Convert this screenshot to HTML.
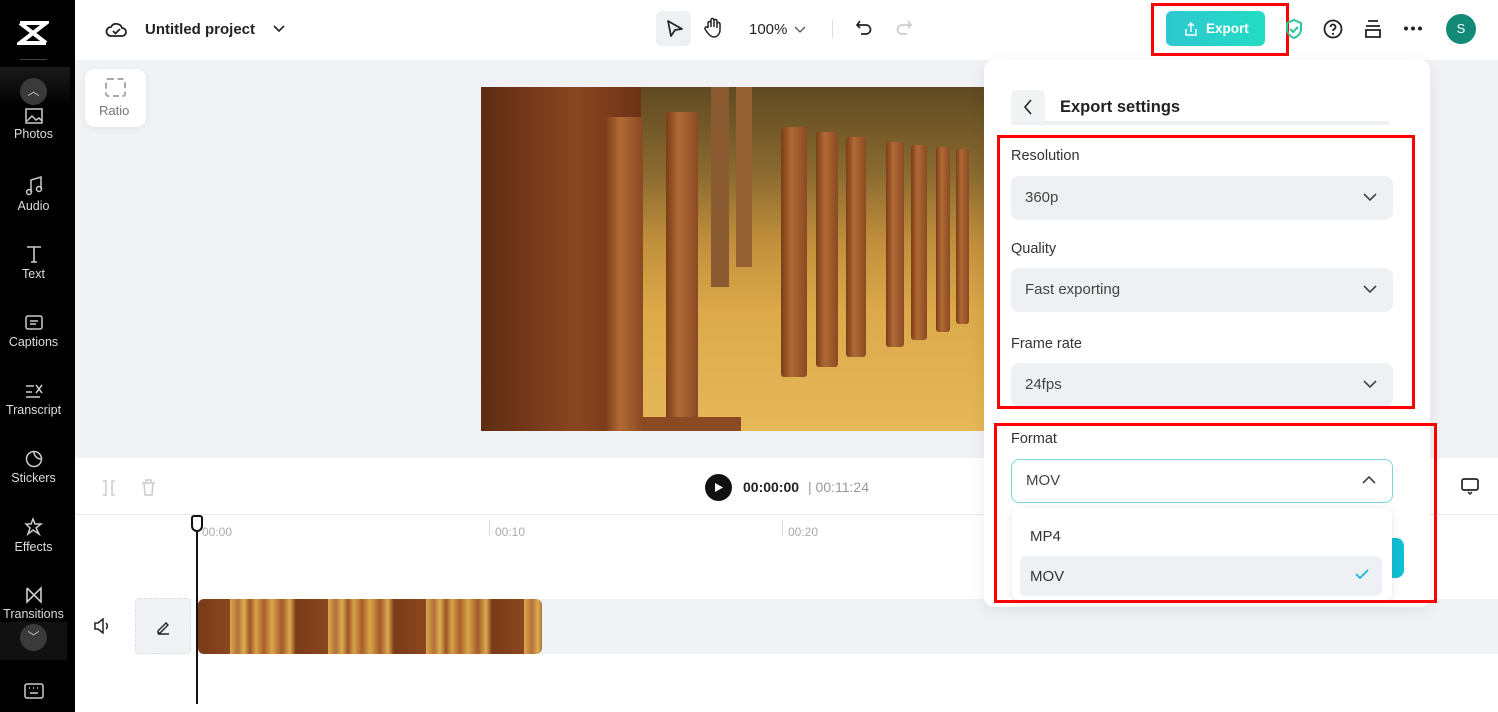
<!DOCTYPE html>
<html><head><meta charset="utf-8"><style>
*{box-sizing:border-box;margin:0;padding:0}
body{width:1498px;height:712px;overflow:hidden;position:relative;font-family:"Liberation Sans",sans-serif;background:#fff;color:#1f2329}
.abs{position:absolute}
.side{left:0;top:0;width:75px;height:712px;background:#000}
.si{position:absolute;left:0;width:67px;text-align:center;color:#ddd;font-size:12.5px}
.si svg{display:block;margin:0 auto 3px}
.red{position:absolute;border:3px solid #f00}
.lbl{position:absolute;left:1011px;font-size:14.5px;color:#333}
.sel{position:absolute;left:1011px;width:382px;height:44px;background:#eef0f3;border-radius:8px;font-size:15px;color:#444;padding:13px 0 0 14px}
.sel svg{position:absolute;right:16px;top:17px}
.post{position:absolute;background:linear-gradient(90deg,#7a3d16,#b06a35 40%,#8a4a22);border-radius:3px}
</style></head><body>
<div class="abs side"></div>
<svg class="abs" style="left:17px;top:20px" width="32" height="26" viewBox="0 0 32 26"><path d="M3 3h26L3 23h26" stroke="#fff" stroke-width="4" fill="none"/><path d="M3 3l26 20" stroke="#fff" stroke-width="4" fill="none"/></svg>
<div class="abs" style="left:20px;top:59px;width:27px;height:1px;background:#444"></div>
<div class="abs" style="left:0;top:67px;width:70px;height:40px;background:linear-gradient(#1a1a1a,#000)"></div>
<div class="si" style="top:108px"><svg width="18" height="16"><rect x="1" y="1" width="16" height="14" stroke="#ccc" stroke-width="1.5" fill="none"/><path d="M2 13l5-5 4 4 3-2 3 3" stroke="#ccc" fill="none" stroke-width="1.5"/></svg>Photos</div>
<div class="abs" style="left:20px;top:78px;width:27px;height:27px;border-radius:50%;background:#3a3a3a;color:#ccc;font-size:12px;text-align:center;line-height:27px">︿</div>
<div class="si" style="top:176px"><svg width="18" height="20"><path d="M6 16V4l10-3v12" stroke="#ccc" stroke-width="1.5" fill="none"/><circle cx="4" cy="16" r="2.5" stroke="#ccc" fill="none" stroke-width="1.5"/><circle cx="14" cy="13" r="2.5" stroke="#ccc" fill="none" stroke-width="1.5"/></svg>Audio</div>
<div class="si" style="top:244px"><svg width="18" height="20"><path d="M2 3h14M9 3v15M6 18h6" stroke="#ccc" stroke-width="1.6" fill="none"/></svg>Text</div>
<div class="si" style="top:314px"><svg width="18" height="18"><rect x="1" y="2" width="16" height="13" rx="2" stroke="#ccc" fill="none" stroke-width="1.5"/><path d="M5 7h8M5 10h6" stroke="#ccc" stroke-width="1.5"/></svg>Captions</div>
<div class="si" style="top:382px"><svg width="20" height="18"><path d="M2 4h8M2 10h6M2 15h14M12 3l6 8M18 3l-6 8" stroke="#ccc" stroke-width="1.5" fill="none"/></svg>Transcript</div>
<div class="si" style="top:450px"><svg width="18" height="18"><circle cx="9" cy="9" r="7.5" stroke="#ccc" fill="none" stroke-width="1.5"/><path d="M9 2a7 7 0 0 0 7 7" stroke="#ccc" fill="none" stroke-width="1.5"/></svg>Stickers</div>
<div class="si" style="top:517px"><svg width="20" height="20"><path d="M9 2l2 5 6 0-5 4 3 6-6-4-5 4 2-6-4-4 5 0z" stroke="#ccc" fill="none" stroke-width="1.5"/></svg>Effects</div>
<div class="si" style="top:586px"><svg width="18" height="18"><path d="M2 2v14L16 2v14L2 2" stroke="#ccc" fill="none" stroke-width="1.6"/></svg>Transitions</div>
<div class="abs" style="left:0;top:622px;width:67px;height:38px;background:#111"></div>
<div class="abs" style="left:20px;top:624px;width:27px;height:27px;border-radius:50%;background:#3a3a3a;color:#ccc;font-size:12px;text-align:center;line-height:27px">﹀</div>
<svg class="abs" style="left:24px;top:683px" width="20" height="16"><rect x="1" y="1" width="18" height="14" rx="2" stroke="#ccc" fill="none" stroke-width="1.5"/><path d="M5 5h1M9 5h1M13 5h1M6 10h8" stroke="#ccc" stroke-width="1.5"/></svg>
<div class="abs" style="left:75px;top:340px;width:10px;height:62px;background:#222;border-radius:0 8px 8px 0"></div>

<svg class="abs" style="left:105px;top:19px" width="22" height="20" viewBox="0 0 22 20"><path d="M6 17h11a4 4 0 0 0 0-8 6 6 0 0 0-11-1 4.5 4.5 0 0 0 0 9z" stroke="#222" stroke-width="1.8" fill="none"/><path d="M8 12l2.5 2.5L15 10" stroke="#222" stroke-width="1.8" fill="none"/></svg>
<div class="abs" style="left:145px;top:21px;font-size:15px;font-weight:bold;color:#222">Untitled project</div>
<svg class="abs" style="left:273px;top:25px" width="12" height="8"><path d="M1 1l5 5 5-5" stroke="#222" stroke-width="1.6" fill="none"/></svg>
<div class="abs" style="left:656px;top:11px;width:35px;height:35px;background:#eef0f3;border-radius:6px"></div>
<svg class="abs" style="left:666px;top:19px" width="18" height="20"><path d="M2 2l14 8-7 1-4 6z" stroke="#222" stroke-width="1.7" fill="none" stroke-linejoin="round"/></svg>
<svg class="abs" style="left:703px;top:17px" width="20" height="22"><path d="M5 11V6a1.5 1.5 0 0 1 3 0v4V3a1.5 1.5 0 0 1 3 0v7V4a1.5 1.5 0 0 1 3 0v7-4a1.5 1.5 0 0 1 3 0v6c0 4-3 7-6 7s-5-2-7-5l-2-3a1.5 1.5 0 0 1 3-1z" stroke="#222" stroke-width="1.5" fill="none"/></svg>
<div class="abs" style="left:749px;top:21px;font-size:15px;color:#222">100%</div>
<svg class="abs" style="left:794px;top:26px" width="12" height="8"><path d="M1 1l5 5 5-5" stroke="#555" stroke-width="1.3" fill="none"/></svg>
<div class="abs" style="left:832px;top:20px;width:1px;height:18px;background:#ddd"></div>
<svg class="abs" style="left:855px;top:19px" width="18" height="18"><path d="M5 2L2 6l3 3M2 6h9a4.5 4.5 0 0 1 0 9H6" stroke="#222" stroke-width="1.7" fill="none"/></svg>
<svg class="abs" style="left:895px;top:19px" width="18" height="18"><path d="M13 2l3 4-3 3M16 6H7a4.5 4.5 0 0 0 0 9h5" stroke="#ccc" stroke-width="1.7" fill="none"/></svg>
<div class="abs" style="left:1166px;top:11px;width:99px;height:35px;border-radius:6px;background:linear-gradient(90deg,#2ec8d0,#22dcc4);color:#fff;font-weight:bold;font-size:13.5px;padding:10px 0 0 40px">Export</div>
<svg class="abs" style="left:1184px;top:21px" width="14" height="16"><path d="M4 5l3-3 3 3M7 2v9M2 8v6h10V8" stroke="#fff" stroke-width="1.4" fill="none"/></svg>
<div class="red" style="left:1151px;top:3px;width:138px;height:53px"></div>
<svg class="abs" style="left:1284px;top:18px" width="20" height="22"><path d="M10 2l7 3v6c0 5-4 8-7 9-3-1-7-4-7-9V5z" stroke="#27c49a" stroke-width="2" fill="none"/><path d="M6 11l3 3 5-5" stroke="#27c49a" stroke-width="2" fill="none"/></svg>
<svg class="abs" style="left:1323px;top:19px" width="20" height="20"><circle cx="10" cy="10" r="8.5" stroke="#222" stroke-width="1.8" fill="none"/><path d="M7.5 8a2.5 2.5 0 1 1 3.5 2.3c-.8.4-1 1-1 1.7" stroke="#222" stroke-width="1.8" fill="none"/><circle cx="10" cy="14.8" r="1.1" fill="#222"/></svg>
<svg class="abs" style="left:1364px;top:19px" width="18" height="20"><path d="M4 2h10M2 7h14M2 11h14v7H2z" stroke="#222" stroke-width="1.8" fill="none"/></svg>
<svg class="abs" style="left:1403px;top:26px" width="20" height="5"><circle cx="3" cy="2.5" r="2" fill="#222"/><circle cx="10" cy="2.5" r="2" fill="#222"/><circle cx="17" cy="2.5" r="2" fill="#222"/></svg>
<div class="abs" style="left:1446px;top:14px;width:30px;height:30px;border-radius:50%;background:#128a77;color:#fff;font-size:13px;text-align:center;line-height:30px">S</div>

<div class="abs" style="left:75px;top:60px;width:1423px;height:398px;background:#f0f2f5"></div>
<div class="abs" style="left:85px;top:69px;width:61px;height:58px;background:#fff;border-radius:10px;box-shadow:0 2px 8px rgba(0,0,0,.06)"></div>
<div class="abs" style="left:105px;top:78px;width:21px;height:19px;border:2px dashed #aaa;border-radius:3px"></div>
<div class="abs" style="left:99px;top:103px;font-size:13px;color:#777">Ratio</div>
<div class="abs" style="left:481px;top:87px;width:504px;height:344px;overflow:hidden;background:linear-gradient(180deg,#5f4a22 0%,#8a6a30 25%,#c08f3c 45%,#dba94a 65%,#e6b85a 100%)">
 <div class="abs" style="left:0;top:0;width:160px;height:344px;background:linear-gradient(90deg,#5e2c12,#8a4521 60%,#6b3315)"></div>
 <div class="post" style="left:124px;top:30px;width:38px;height:314px"></div>
 <div class="post" style="left:185px;top:25px;width:32px;height:308px"></div>
 <div class="post" style="left:300px;top:40px;width:26px;height:250px"></div>
 <div class="post" style="left:335px;top:45px;width:22px;height:235px"></div>
 <div class="post" style="left:365px;top:50px;width:20px;height:220px"></div>
 <div class="post" style="left:405px;top:55px;width:18px;height:205px"></div>
 <div class="post" style="left:430px;top:58px;width:16px;height:195px"></div>
 <div class="post" style="left:455px;top:60px;width:14px;height:185px"></div>
 <div class="post" style="left:475px;top:62px;width:13px;height:175px"></div>
 <div class="abs" style="left:230px;top:0;width:18px;height:200px;background:#8a5a30"></div>
 <div class="abs" style="left:255px;top:0;width:16px;height:180px;background:#946134"></div>
 <div class="abs" style="left:160px;top:330px;width:100px;height:14px;background:#8a4a22"></div>
</div>

<svg class="abs" style="left:101px;top:479px" width="16" height="18"><path d="M2 2h3v14H2M14 2h-3v14h3" stroke="#ccc" stroke-width="1.5" fill="none"/></svg>
<svg class="abs" style="left:140px;top:478px" width="17" height="19"><path d="M2 5h13M6 5V2h5v3M4 5l1 12h7l1-12" stroke="#ccc" stroke-width="1.5" fill="none"/></svg>
<div class="abs" style="left:705px;top:474px;width:27px;height:27px;border-radius:50%;background:#111"></div>
<svg class="abs" style="left:714px;top:482px" width="10" height="11"><path d="M1 1l8 4.5L1 10z" fill="#fff"/></svg>
<div class="abs" style="left:743px;top:479px;font-size:14px;font-weight:bold;color:#222">00:00:00</div>
<div class="abs" style="left:808px;top:479px;font-size:14px;color:#999">| 00:11:24</div>
<svg class="abs" style="left:1461px;top:478px" width="18" height="18"><rect x="1" y="1" width="16" height="11" rx="2" stroke="#222" stroke-width="1.7" fill="none"/><path d="M7 14l2 2 2-2" stroke="#222" stroke-width="1.5" fill="none"/></svg>
<div class="abs" style="left:75px;top:514px;width:1423px;height:1px;background:#e8e8e8"></div>

<div class="abs" style="left:202px;top:525px;font-size:12px;color:#aaa">00:00</div>
<div class="abs" style="left:495px;top:525px;font-size:12px;color:#aaa">00:10</div>
<div class="abs" style="left:788px;top:525px;font-size:12px;color:#aaa">00:20</div>
<div class="abs" style="left:489px;top:520px;width:1px;height:16px;background:#ddd"></div>
<div class="abs" style="left:782px;top:520px;width:1px;height:16px;background:#ddd"></div>
<div class="abs" style="left:198px;top:599px;width:1300px;height:55px;background:#f0f2f5"></div>
<svg class="abs" style="left:93px;top:618px" width="18" height="16"><path d="M2 5h3l5-4v14l-5-4H2z" stroke="#222" stroke-width="1.5" fill="none"/><path d="M13 5a4 4 0 0 1 0 6" stroke="#222" stroke-width="1.5" fill="none"/></svg>
<div class="abs" style="left:135px;top:598px;width:56px;height:56px;background:#f0f2f5;border:1px dashed #ddd;border-radius:4px"></div>
<svg class="abs" style="left:155px;top:619px" width="16" height="16"><path d="M3 12l8-8 2 2-8 8H3zM3 15h11" stroke="#222" stroke-width="1.4" fill="none"/></svg>
<div class="abs" style="left:198px;top:599px;width:344px;height:55px;border-radius:6px;background:repeating-linear-gradient(90deg,#7a3a18 0,#8c4620 32px,#d9a94c 32px,#b27038 40px,#dcae52 46px,#9c5526 52px,#d7a348 58px,#a85e2c 66px,#d8a64a 74px,#a35a2a 84px,#dbaa4e 92px,#7a3a18 98px)"></div>
<div class="abs" style="left:196px;top:530px;width:2px;height:174px;background:#111"></div>
<div class="abs" style="left:191px;top:515px;width:12px;height:17px;border:2px solid #111;background:#fff;border-radius:3px 3px 6px 6px"></div>

<div class="abs" style="left:984px;top:60px;width:446px;height:547px;background:#fff;border-radius:10px;box-shadow:0 4px 16px rgba(0,0,0,.08)"></div>
<div class="abs" style="left:1011px;top:90px;width:34px;height:34px;background:#f2f3f5;border-radius:6px"></div>
<svg class="abs" style="left:1023px;top:99px" width="10" height="16"><path d="M8 1L2 8l6 7" stroke="#222" stroke-width="1.6" fill="none"/></svg>
<div class="abs" style="left:1060px;top:98px;font-size:16.5px;font-weight:bold;color:#222">Export settings</div>
<div class="abs" style="left:1011px;top:121px;width:379px;height:4px;background:#eef0f3;border-radius:2px"></div>
<div class="lbl" style="top:148px">Resolution</div>
<div class="sel" style="top:176px">360p<svg width="14" height="9"><path d="M1 1l6 6 6-6" stroke="#444" stroke-width="1.6" fill="none"/></svg></div>
<div class="lbl" style="top:241px">Quality</div>
<div class="sel" style="top:268px">Fast exporting<svg width="14" height="9"><path d="M1 1l6 6 6-6" stroke="#444" stroke-width="1.6" fill="none"/></svg></div>
<div class="lbl" style="top:336px">Frame rate</div>
<div class="sel" style="top:363px">24fps<svg width="14" height="9"><path d="M1 1l6 6 6-6" stroke="#444" stroke-width="1.6" fill="none"/></svg></div>
<div class="red" style="left:997px;top:135px;width:418px;height:274px"></div>
<div class="lbl" style="top:431px">Format</div>
<div class="sel" style="top:459px;background:#fff;border:1.5px solid #7dd6dc;padding-top:12px">MOV<svg width="14" height="9" style="top:15px"><path d="M1 8l6-6 6 6" stroke="#444" stroke-width="1.6" fill="none"/></svg></div>
<div class="abs" style="left:1390px;top:538px;width:14px;height:40px;background:#0fbfd2;border-radius:0 8px 8px 0"></div>
<div class="abs" style="left:1012px;top:508px;width:380px;height:92px;background:#fff;border-radius:8px;box-shadow:0 2px 10px rgba(0,0,0,.1)"></div>
<div class="abs" style="left:1030px;top:528px;font-size:15px;color:#333">MP4</div>
<div class="abs" style="left:1020px;top:556px;width:362px;height:40px;background:#eef0f3;border-radius:6px"></div>
<div class="abs" style="left:1030px;top:568px;font-size:15px;color:#333">MOV</div>
<svg class="abs" style="left:1355px;top:569px" width="14" height="11"><path d="M1 5l4 4 8-8" stroke="#18b9cf" stroke-width="1.8" fill="none"/></svg>
<div class="red" style="left:994px;top:423px;width:443px;height:180px"></div>
</body></html>
